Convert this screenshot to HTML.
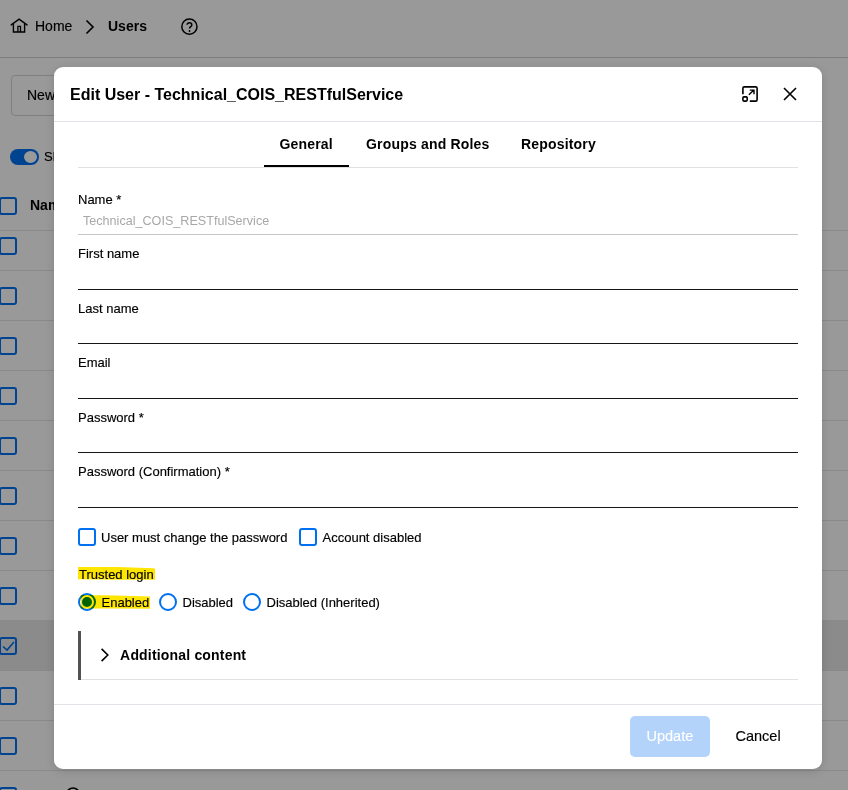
<!DOCTYPE html>
<html><head><meta charset="utf-8">
<style>
*{box-sizing:border-box;margin:0;padding:0}
html,body{width:848px;height:790px;overflow:hidden;background:#fff;font-family:"Liberation Sans",sans-serif;color:#000}
.a{position:absolute}
.page{position:absolute;left:0;top:0;width:848px;height:790px;background:#fff}
.hdrline{left:0;top:57px;width:848px;height:1px;background:#d0d0d0}
.rowline{left:0;width:848px;height:1px;background:#e6e6e6}
.cb{width:18px;height:18px;border:2px solid #0070f2;border-radius:3px;background:transparent}
.overlay{position:absolute;left:0;top:0;width:848px;height:790px;background:rgba(0,0,0,0.4)}
.modal{position:absolute;left:54px;top:67px;width:768px;height:702px;background:#fff;border-radius:9px;box-shadow:0 2px 10px rgba(0,0,0,0.14)}
.t{white-space:nowrap;line-height:1}
.lbl{font-size:13px;color:#000;-webkit-text-stroke:0.15px #000}
.rg{-webkit-text-stroke:0.15px currentColor}
.ul{left:78px;width:720px;height:1px;background:#161616}
.hl{background:#ffe600;mix-blend-mode:multiply}
.b14{font-size:14px;font-weight:bold;letter-spacing:0.18px}
</style></head><body>
<div class="page">
  <!-- breadcrumb -->
  <svg class="a" style="left:10px;top:18px" width="19" height="16" viewBox="0 0 19 16">
    <path d="M1.2 6.9 L9.1 1.2 L17 6.9" fill="none" stroke="#000" stroke-width="1.4" stroke-linejoin="miter" stroke-linecap="round"/>
    <path d="M3.4 5.6 V14 H14.6 V5.6" fill="none" stroke="#000" stroke-width="1.4"/>
    <path d="M7.9 14 V8.3 H10.5 V14" fill="none" stroke="#000" stroke-width="1.3"/>
  </svg>
  <div class="a t rg" style="left:35px;top:19px;font-size:14px;color:#000">Home</div>
  <svg class="a" style="left:84px;top:19px" width="12" height="16" viewBox="0 0 12 16">
    <path d="M2.5 1.5 L9 8 L2.5 14.5" fill="none" stroke="#000" stroke-width="1.6"/>
  </svg>
  <div class="a t b14" style="left:108px;top:19px;letter-spacing:0">Users</div>
  <svg class="a" style="left:180px;top:18px" width="18" height="18" viewBox="0 0 18 18">
    <circle cx="9.4" cy="8.7" r="7.6" fill="none" stroke="#000" stroke-width="1.5"/>
    <path d="M7 6.8 C7 4.2 11.8 4.2 11.8 6.9 C11.8 8.6 9.5 8.8 9.5 10.6" fill="none" stroke="#000" stroke-width="1.5"/>
    <circle cx="9.5" cy="13" r="0.9" fill="#000"/>
  </svg>
  <div class="a hdrline"></div>
  <!-- New button -->
  <div class="a" style="left:10.5px;top:75px;width:120px;height:41px;border:1px solid #d6d6d6;border-radius:4px"></div>
  <div class="a t rg" style="left:27px;top:88px;font-size:14px">New</div>
  <!-- toggle -->
  <div class="a" style="left:10px;top:149px;width:29px;height:16px;border-radius:8px;background:#0070f2"></div>
  <div class="a" style="left:24px;top:151px;width:13px;height:12px;border-radius:50%;background:#fff"></div>
  <div class="a t rg" style="left:44px;top:150px;font-size:13px">Show</div>
  <!-- table header -->
  <div class="a cb" style="left:-1px;top:197px"></div>
  <div class="a t b14" style="left:30px;top:198px;letter-spacing:0">Name</div>
  <div class="a rowline" style="top:230px"></div>
  <div class="a cb" style="left:-1px;top:237px"></div>
  <div class="a rowline" style="top:270px"></div>
  <div class="a cb" style="left:-1px;top:287px"></div>
  <div class="a rowline" style="top:320px"></div>
  <div class="a cb" style="left:-1px;top:337px"></div>
  <div class="a rowline" style="top:370px"></div>
  <div class="a cb" style="left:-1px;top:387px"></div>
  <div class="a rowline" style="top:420px"></div>
  <div class="a cb" style="left:-1px;top:437px"></div>
  <div class="a rowline" style="top:470px"></div>
  <div class="a cb" style="left:-1px;top:487px"></div>
  <div class="a rowline" style="top:520px"></div>
  <div class="a cb" style="left:-1px;top:537px"></div>
  <div class="a rowline" style="top:570px"></div>
  <div class="a cb" style="left:-1px;top:587px"></div>
  <div class="a" style="left:0;top:620px;width:848px;height:50px;background:#e8e8e8"></div>
  <div class="a rowline" style="top:620px"></div>
  <div class="a cb" style="left:-1px;top:637px"></div>
  <svg class="a" style="left:0;top:637px" width="18" height="18" viewBox="0 0 18 18"><path d="M3 9.5 L7 13 L14 5" fill="none" stroke="#0070f2" stroke-width="1.6"/></svg>
  <div class="a rowline" style="top:670px"></div>
  <div class="a cb" style="left:-1px;top:687px"></div>
  <div class="a rowline" style="top:720px"></div>
  <div class="a cb" style="left:-1px;top:737px"></div>
  <div class="a rowline" style="top:770px"></div>
  <div class="a cb" style="left:-1px;top:787px"></div>
  <svg class="a" style="left:64px;top:786px" width="18" height="18" viewBox="0 0 18 18"><circle cx="9" cy="8.5" r="6.5" fill="none" stroke="#000" stroke-width="1.5"/></svg>
</div>
<div class="overlay"></div>

<div class="modal"></div>
<!-- modal content (absolute page coords) -->
<div class="a t" style="left:70px;top:87px;font-size:16px;font-weight:bold;color:#000">Edit User - Technical_COIS_RESTfulService</div>
<svg class="a" style="left:741px;top:85px" width="18" height="18" viewBox="0 0 18 18">
  <path d="M1.9 9.3 V3.3 Q1.9 1.9 3.3 1.9 H14.7 Q16.1 1.9 16.1 3.3 V14.7 Q16.1 16.1 14.7 16.1 H8.8" fill="none" stroke="#000" stroke-width="1.6"/>
  <rect x="1.9" y="11.9" width="4.3" height="4.2" rx="1" fill="none" stroke="#000" stroke-width="1.6"/>
  <path d="M7.9 9.8 L12.9 5 M8.8 5.1 H13 V9.3" fill="none" stroke="#000" stroke-width="1.4"/>
</svg>
<svg class="a" style="left:782px;top:86px" width="16" height="16" viewBox="0 0 16 16">
  <path d="M2 2 L14 14 M14 2 L2 14" fill="none" stroke="#000" stroke-width="1.6"/>
</svg>
<div class="a" style="left:54px;top:121px;width:768px;height:1px;background:#e0e3e8"></div>

<!-- tabs -->
<div class="a t b14" style="left:279.5px;top:137px">General</div>
<div class="a t b14" style="left:366px;top:137px">Groups and Roles</div>
<div class="a t b14" style="left:521px;top:137px">Repository</div>
<div class="a" style="left:78px;top:167px;width:720px;height:1px;background:#e0e0e0"></div>
<div class="a" style="left:264px;top:165px;width:85px;height:2px;background:#000"></div>

<!-- fields -->
<div class="a t lbl" style="left:78px;top:192.5px">Name *</div>
<div class="a t" style="left:83px;top:214.5px;font-size:12.6px;color:#a8a8a8">Technical_COIS_RESTfulService</div>
<div class="a ul" style="top:234px;background:#c6c6c6"></div>

<div class="a t lbl" style="left:78px;top:246.5px">First name</div>
<div class="a ul" style="top:289px"></div>
<div class="a t lbl" style="left:78px;top:301.5px">Last name</div>
<div class="a ul" style="top:343px"></div>
<div class="a t lbl" style="left:78px;top:355.5px">Email</div>
<div class="a ul" style="top:398px"></div>
<div class="a t lbl" style="left:78px;top:410.5px">Password *</div>
<div class="a ul" style="top:452px"></div>
<div class="a t lbl" style="left:78px;top:464.5px">Password (Confirmation) *</div>
<div class="a ul" style="top:507px"></div>

<!-- checkboxes -->
<div class="a cb" style="left:78px;top:528px;height:18px"></div>
<div class="a t lbl" style="left:101px;top:531px">User must change the password</div>
<div class="a cb" style="left:299px;top:528px;height:18px"></div>
<div class="a t lbl" style="left:322.5px;top:531px">Account disabled</div>

<!-- trusted login -->
<div class="a t lbl" style="left:79px;top:567.5px">Trusted login</div>
<div class="a hl" style="left:77.7px;top:566.5px;width:77.8px;height:13.3px;clip-path:polygon(0 1px,1.5px 0,40px 0.5px,76px 1.8px,77.8px 2.2px,77.8px 13.2px,40px 13.3px,0 12.8px)"></div>

<div class="a" style="left:78px;top:593px;width:18px;height:18px;border:2px solid #0070f2;border-radius:50%"></div>
<div class="a" style="left:82px;top:597px;width:10px;height:10px;border-radius:50%;background:#0070f2"></div>
<div class="a t lbl" style="left:101.5px;top:595.5px">Enabled</div>
<div class="a hl" style="left:80.6px;top:595px;width:69.6px;height:13.8px;clip-path:polygon(0 0.4px,1.2px 0,35px 0.6px,69.6px 1.6px,69.6px 13.8px,35px 13.6px,0 13.4px)"></div>
<div class="a" style="left:159px;top:593px;width:18px;height:18px;border:2px solid #0070f2;border-radius:50%"></div>
<div class="a t lbl" style="left:182.5px;top:595.5px">Disabled</div>
<div class="a" style="left:243px;top:593px;width:18px;height:18px;border:2px solid #0070f2;border-radius:50%"></div>
<div class="a t lbl" style="left:266.5px;top:595.5px">Disabled (Inherited)</div>

<!-- accordion -->
<div class="a" style="left:78px;top:631px;width:3px;height:49px;background:#525252"></div>
<div class="a" style="left:81px;top:679px;width:717px;height:1px;background:#e0e0e0"></div>
<svg class="a" style="left:98.7px;top:647px" width="12" height="16" viewBox="0 0 12 16">
  <path d="M2.6 1.9 L8.8 8 L2.6 14.1" fill="none" stroke="#000" stroke-width="1.6"/>
</svg>
<div class="a t b14" style="left:120.1px;top:648px">Additional content</div>

<!-- footer -->
<div class="a" style="left:54px;top:704px;width:768px;height:1px;background:#e0e3e8"></div>
<div class="a" style="left:630px;top:716px;width:80px;height:41px;border-radius:5px;background:#b3d3fb"></div>
<div class="a t rg" style="left:646.5px;top:728.5px;font-size:14.5px;color:#fff">Update</div>
<div class="a t rg" style="left:735.5px;top:728.5px;font-size:14.5px;color:#000">Cancel</div>
</body></html>
